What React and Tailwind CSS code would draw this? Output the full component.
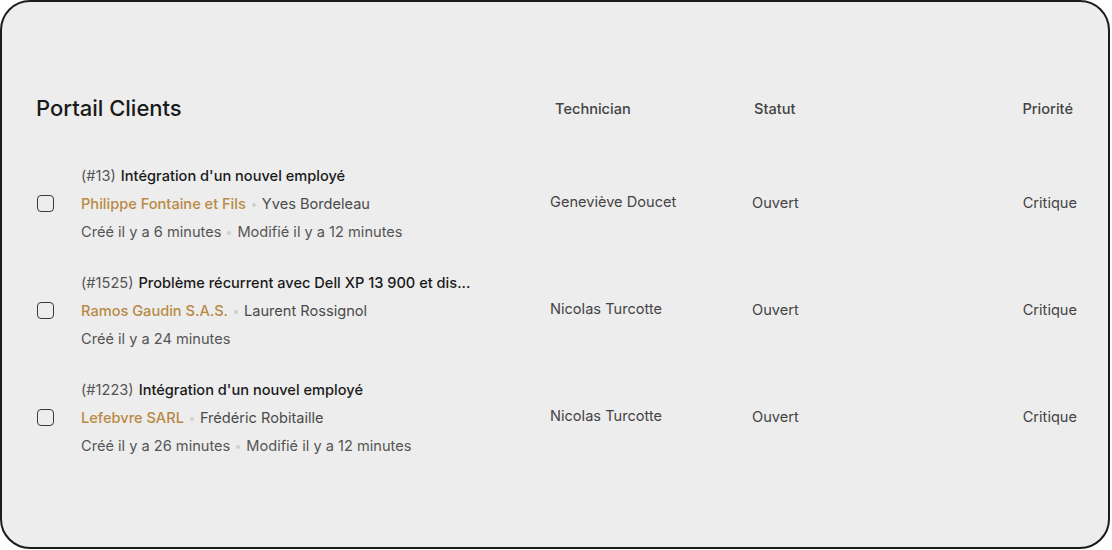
const tickets = [
    {
        id: '#13',
        title: "Intégration d'un nouvel employé",
        company: 'Philippe Fontaine et Fils',
        contact: 'Yves Bordeleau',
        created: 'Créé il y a 6 minutes',
        modified: 'Modifié il y a 12 minutes',
        technician: 'Geneviève Doucet',
        status: 'Ouvert',
        priority: 'Critique',
    },
    {
        id: '#1525',
        title: 'Problème récurrent avec Dell XP 13 900 et dis...',
        company: 'Ramos Gaudin S.A.S.',
        contact: 'Laurent Rossignol',
        created: 'Créé il y a 24 minutes',
        modified: null,
        technician: 'Nicolas Turcotte',
        status: 'Ouvert',
        priority: 'Critique',
    },
    {
        id: '#1223',
        title: "Intégration d'un nouvel employé",
        company: 'Lefebvre SARL',
        contact: 'Frédéric Robitaille',
        created: 'Créé il y a 26 minutes',
        modified: 'Modifié il y a 12 minutes',
        technician: 'Nicolas Turcotte',
        status: 'Ouvert',
        priority: 'Critique',
    },
]

function Dot() {
    return <span className="inline-block w-[4px] h-[4px] rounded-full bg-[#cfcfcf] mx-[6px] align-middle" />
}

function TicketRow({ ticket }) {
    return (
        <div className="grid grid-cols-[514px_202px_1fr] items-center">
            <div className="flex items-center">
                <div className="w-[17px] h-[17px] ml-[1px] -mt-[1px] rounded-[4px] border-[1.5px] border-[#3a3a3a] shrink-0" />
                <div className="ml-[27px] flex flex-col text-[14.6px] leading-[28px]">
                    <div className="whitespace-nowrap">
                        <span className="text-[#555]">({ticket.id})</span>
                        <span className="ml-[5px] font-medium text-[#1a1a1a]">{ticket.title}</span>
                    </div>
                    <div className="whitespace-nowrap">
                        <span className="font-medium text-[#b98a45]">{ticket.company}</span>
                        <Dot />
                        <span className="text-[#4a4a4a]">{ticket.contact}</span>
                    </div>
                    <div className="whitespace-nowrap text-[#555]">
                        {ticket.created}
                        {ticket.modified && (
                            <>
                                <Dot />
                                {ticket.modified}
                            </>
                        )}
                    </div>
                </div>
            </div>
            <div className="text-[14.6px] text-[#444] -mt-[3px]">{ticket.technician}</div>
            <div className="flex justify-between text-[14.6px] text-[#444]">
                <span>{ticket.status}</span>
                <span>{ticket.priority}</span>
            </div>
        </div>
    )
}

export default function App() {
    return (
        <div className="w-[1112px] h-[550px] bg-white" style={{ fontFamily: 'Inter, "Noto Sans", sans-serif' }}>
            <div className="w-[1110px] h-[549px] rounded-[30px] border-2 border-[#1c1c1c] bg-[#ededed] pl-[34px] pr-[31px] pt-[92px]">
                <header className="grid grid-cols-[514px_202px_1fr] items-center h-[28px]">
                    <h1 className="text-[22px] font-medium text-[#1a1a1a] leading-[28px]">Portail Clients</h1>
                    <span className="pl-[5px] mt-[3px] text-[14.6px] font-medium text-[#444]">Technician</span>
                    <div className="flex justify-between pl-[2px] pr-[4px] mt-[3px] text-[14.6px] font-medium text-[#444]">
                        <span>Statut</span>
                        <span>Priorité</span>
                    </div>
                </header>
                <section className="mt-[40px] flex flex-col gap-[23px]">
                    {tickets.map((t) => (
                        <TicketRow key={t.id} ticket={t} />
                    ))}
                </section>
            </div>
        </div>
    )
}
